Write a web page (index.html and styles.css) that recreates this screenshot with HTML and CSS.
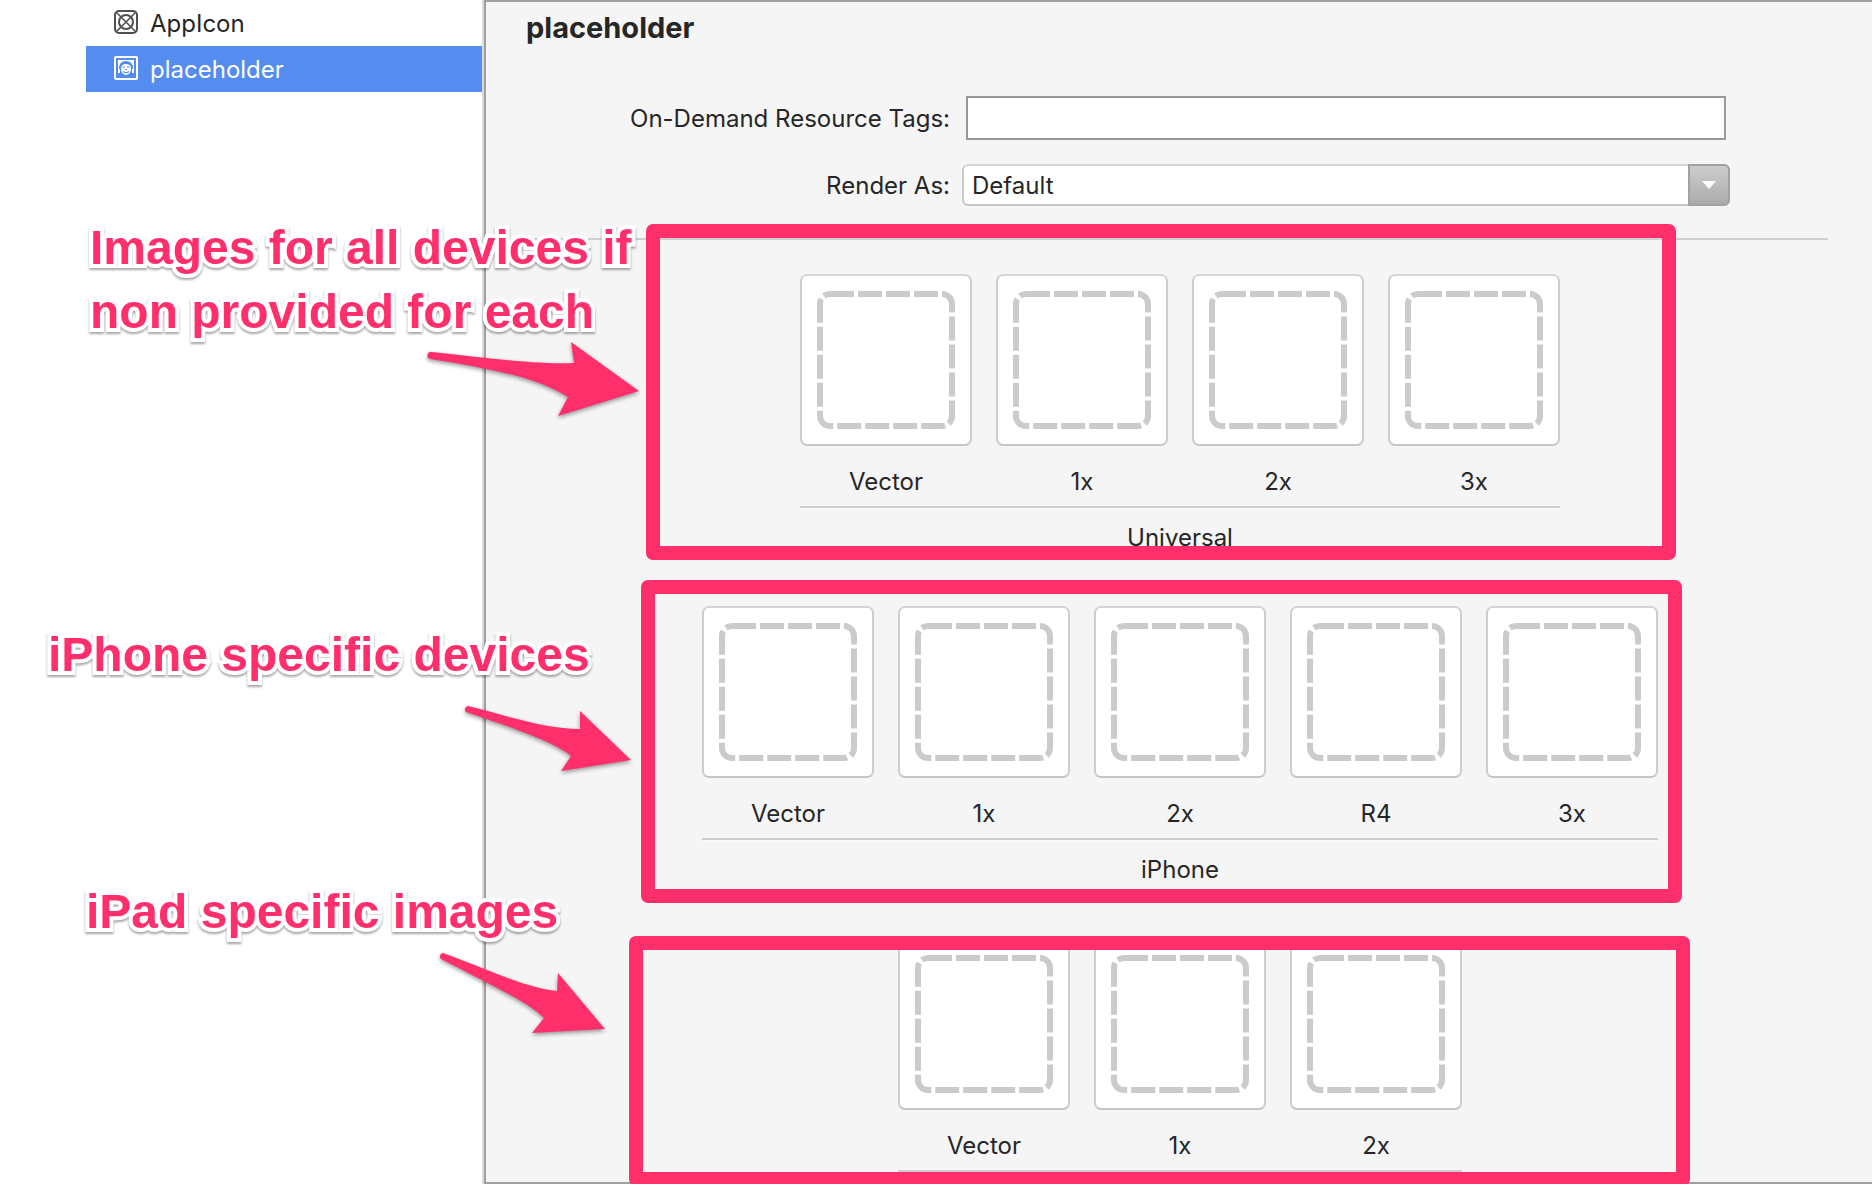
FILE: index.html
```html
<!DOCTYPE html>
<html lang="en">
<head>
<meta charset="utf-8">
<title>Asset catalog</title>
<link rel="stylesheet" href="styles.css">
</head>
<body>
<svg class="defs" aria-hidden="true">
  <symbol id="well" viewBox="0 0 168 168">
    <rect x="18" y="18" width="132" height="132" rx="10" fill="none" stroke="#cbcbcb" stroke-width="6" stroke-dasharray="24 4"/>
  </symbol>
</svg>
<div class="page">
  <nav class="sidebar" aria-label="Assets">
    <a class="asset" href="#appicon">
      <svg class="asset-icon" viewBox="0 0 24 24" fill="none" stroke="#505050" stroke-width="2" aria-hidden="true">
        <rect x="1" y="1" width="22" height="22" rx="4"/>
        <circle cx="12" cy="12" r="7"/>
        <path d="M2 2l20 20M22 2L2 22" stroke-width="1.6"/>
      </svg>
      AppIcon
    </a>
    <a class="asset selected" href="#placeholder" aria-current="page">
      <svg class="asset-icon" viewBox="0 0 24 24" aria-hidden="true">
        <rect x="1" y="1" width="22" height="22" rx="1" fill="none" stroke="#fff" stroke-width="2"/>
        <path fill="#fff" d="M4 4h16v12h-1v-3q0-8-7-8t-7 8v3H4z"/>
        <path fill="#fff" d="M12 8q5 0 5 5t-5 6q-5-1-5-6t5-5z"/>
        <path fill="#fff" d="M4 13h2v4H4zM18 13h2v4h-2z"/>
        <path stroke="#558cef" stroke-width="1.2" fill="none" d="M8.500 11h2.500M13 11h2.500M11 13.500h2M9 15.500q3 2.500 6 0"/>
      </svg>
      placeholder
    </a>
  </nav>

  <main class="editor">
    <h1 class="title">placeholder</h1>
    <form class="settings">
      <label for="tags">On-Demand Resource Tags:</label>
      <input class="tags" id="tags" type="text">
      <label for="render">Render As:</label>
      <div class="combo">
        <select class="combo-select" id="render"><option>Default</option></select>
        <span class="combo-arrow"><svg viewBox="0 0 14 8" width="14" height="8" aria-hidden="true"><path d="M0 0h14L7 8z" fill="#fff"/></svg></span>
      </div>
    </form>
    <hr class="rule">
    <div class="groups">
      <section class="group">
        <ul class="slots">
          <li class="slot"><svg class="well"><use href="#well"/></svg>Vector</li>
          <li class="slot"><svg class="well"><use href="#well"/></svg>1x</li>
          <li class="slot"><svg class="well"><use href="#well"/></svg>2x</li>
          <li class="slot"><svg class="well"><use href="#well"/></svg>3x</li>
        </ul>
        <h2 class="caption">Universal</h2>
        <div class="frame frame-universal"></div>
      </section>
      <section class="group">
        <ul class="slots">
          <li class="slot"><svg class="well"><use href="#well"/></svg>Vector</li>
          <li class="slot"><svg class="well"><use href="#well"/></svg>1x</li>
          <li class="slot"><svg class="well"><use href="#well"/></svg>2x</li>
          <li class="slot"><svg class="well"><use href="#well"/></svg>R4</li>
          <li class="slot"><svg class="well"><use href="#well"/></svg>3x</li>
        </ul>
        <h2 class="caption">iPhone</h2>
        <div class="frame frame-iphone"></div>
      </section>
      <section class="group">
        <ul class="slots">
          <li class="slot"><svg class="well"><use href="#well"/></svg>Vector</li>
          <li class="slot"><svg class="well"><use href="#well"/></svg>1x</li>
          <li class="slot"><svg class="well"><use href="#well"/></svg>2x</li>
        </ul>
        <div class="frame frame-ipad"></div>
      </section>
    </div>
  </main>

  <p class="note note-universal">Images for all devices if<br>non provided for each</p>
  <p class="note note-iphone">iPhone specific devices</p>
  <p class="note note-ipad">iPad specific images</p>
  <svg class="arrows" viewBox="0 0 660 1100" width="660" height="1100" fill="#ff2f6c" aria-hidden="true">
    <path d="M432 352C480 357 535 365 574 363L571 342L639 391L558 416L568 397C535 376 480 367 430 359A3.500 3.500 0 0 1 432 352Z"/>
    <path d="M468 706C505 715 545 729 580 729V711L631 760L561 771L571 756C555 742 510 727 466 712A3.500 3.500 0 0 1 468 706Z"/>
    <path d="M443 953C480 966 525 988 557 991L558 973L605 1029L532 1033L544 1018C530 1003 495 987 441 959A3.500 3.500 0 0 1 443 953Z"/>
  </svg>
</div>
</body>
</html>
```
FILE: styles.css
```css
* {
  box-sizing: border-box;
}

body {
  margin: 0;
  background: #fff;
  color: #262626;
  font: 24px/32px Inter, "Liberation Sans", sans-serif;
}

.defs {
  position: absolute;
  width: 0;
  height: 0;
}

.page {
  position: relative;
  display: flex;
}

/* Asset list */
.sidebar {
  flex: 0 0 484px;
  padding-left: 86px;
  border-right: 2px solid #d9d9d9;
}

.asset {
  display: flex;
  align-items: center;
  gap: 12px;
  height: 46px;
  padding: 2px 0 0 28px;
  color: inherit;
  text-decoration: none;
}

.asset.selected {
  background: #558cef;
  color: #fff;
}

.asset-icon {
  width: 24px;
  height: 24px;
  margin-bottom: 4px;
}

/* Editor */
.editor {
  flex: 1;
  min-width: 0;
  padding-bottom: 10px;
  background: #f5f5f5;
  border: 2px solid #9f9f9f;
  border-right: 0;
}

.title {
  margin: 6px 40px 0;
  font-size: 29px;
  line-height: 40px;
  font-weight: 700;
}

.settings {
  display: grid;
  grid-template-columns: 424px 1fr;
  column-gap: 12px;
  row-gap: 24px;
  align-items: center;
  margin: 48px 142px 0 40px;
}

.settings label {
  padding-top: 2px;
  text-align: right;
}

.tags {
  height: 44px;
  margin: 0 4px;
  padding: 0 8px;
  border: 2px solid #999;
  background: #fff;
  font: inherit;
}

.combo {
  display: flex;
  height: 42px;
}

.combo-select {
  flex: 1;
  min-width: 0;
  appearance: none;
  margin-right: -42px;
  padding: 2px 50px 0 8px;
  border: 2px solid;
  border-color: #d4d4d4 #c8c8c8 #c4c4c4;
  border-radius: 6px;
  background: #fff;
  color: inherit;
  font: inherit;
}

.combo-arrow {
  position: relative;
  display: flex;
  align-items: center;
  justify-content: center;
  width: 42px;
  border: 2px solid #a2a2a2;
  border-radius: 0 6px 6px 0;
  background: linear-gradient(#cdcdcd, #ababab);
  pointer-events: none;
}

.rule {
  height: 2px;
  margin: 32px 44px 0 40px;
  border: 0;
  background: #cfcfcf;
}

/* Image groups */
.groups {
  display: flex;
  flex-direction: column;
  align-items: center;
  gap: 52px;
  padding: 34px 0 0 2px;
}

.group {
  position: relative;
}

.slots {
  display: flex;
  gap: 24px;
  margin: 0;
  padding: 0 0 8px;
  list-style: none;
  border-bottom: 2px solid #cdcdcd;
  box-shadow: 0 2px #f9f9f9;
}

.slot {
  display: flex;
  flex-direction: column;
  align-items: center;
  gap: 20px;
}

.well {
  width: 172px;
  height: 172px;
  border: 2px solid;
  border-color: #d4d4d4 #cdcdcd #c6c6c6;
  border-radius: 7px;
  background: #fff;
}

.caption {
  margin: 14px 0 0;
  font-size: 24px;
  line-height: 32px;
  font-weight: 400;
  text-align: center;
}

/* Marked-up highlights */
.frame {
  position: absolute;
  border: 14px solid #ff2f6c;
  border-radius: 7px;
  pointer-events: none;
}

.frame-universal {
  top: -50px;
  right: -116px;
  left: -154px;
  height: 336px;
}

.frame-iphone {
  top: -26px;
  right: -24px;
  left: -61px;
  height: 323px;
}

.frame-ipad {
  top: -2px;
  right: -228px;
  left: -269px;
  height: 250px;
}

.note {
  position: absolute;
  margin: 0;
  color: #ff2f6c;
  font: 700 48px/64px "Liberation Sans", Arial, sans-serif;
  white-space: nowrap;
  -webkit-text-stroke: 8px #fff;
  paint-order: stroke fill;
  stroke-linejoin: round;
  filter: drop-shadow(0 2px 1px rgba(0, 0, 0, 0.35));
}

.note-universal {
  top: 216px;
  left: 90px;
}

.note-iphone {
  top: 623px;
  left: 48px;
}

.note-ipad {
  top: 880px;
  left: 86px;
}

.arrows {
  position: absolute;
  top: 0;
  left: 0;
  filter: drop-shadow(0 2px 2px rgba(0, 0, 0, 0.4));
  pointer-events: none;
}
```
